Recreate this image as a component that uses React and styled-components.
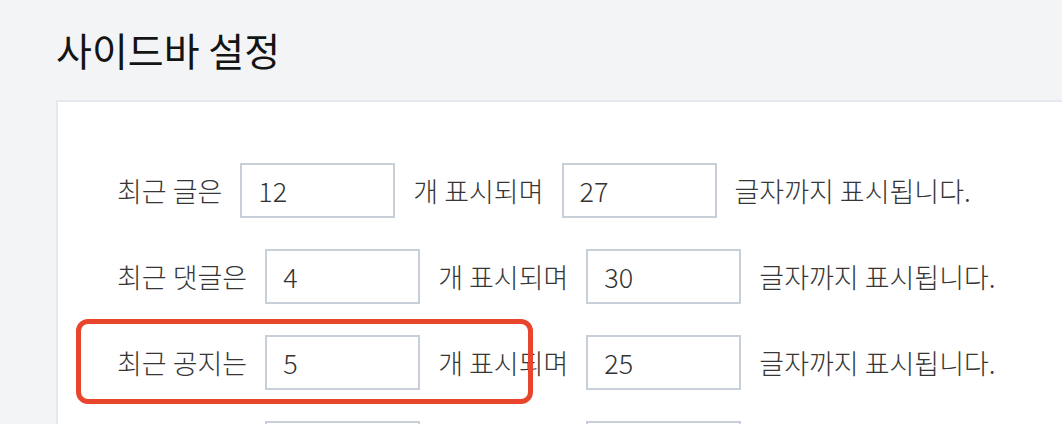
import React from "react";
import styled, { createGlobalStyle } from "styled-components";

const Global = createGlobalStyle`
  html, body { margin: 0; padding: 0; background: #f3f4f6; overflow: hidden; }
  body { font-family: "Noto Sans CJK KR", "Noto Sans", sans-serif; }
  * { box-sizing: border-box; }
`;

const Page = styled.div`
  width: 1062px;
  height: 424px;
  overflow: hidden;
  padding: 30px 0 0 56px;
`;

const Title = styled.h1`
  margin: 0 0 31px 0;
  font-size: 39px;
  line-height: 39px;
  font-weight: 400;
  color: #141414;
  letter-spacing: 0;
`;

const Card = styled.section`
  width: 1100px;
  min-height: 400px;
  background: #ffffff;
  border: 2px solid #e4e8ef;
  border-right: none;
  padding: 61px 0 0 59px;
  display: flex;
  flex-direction: column;
  gap: 31px;
`;

const Row = styled.div`
  position: relative;
  display: flex;
  align-items: center;
  gap: 18px;
  height: 55px;
  font-size: 27px;
  font-weight: 300;
  color: #363636;
  white-space: nowrap;
`;

const Text = styled.span`
  line-height: 1;
`;

const NumInput = styled.input`
  width: 155px;
  height: 55px;
  border: 2px solid #c9cfd9;
  border-radius: 0;
  padding: 0 0 0 16px;
  font-family: "Noto Sans CJK KR", "Noto Sans", sans-serif;
  font-size: 27px;
  font-weight: 300;
  color: #333;
  background: #fff;
  outline: none;
`;

const Highlight = styled.div`
  position: absolute;
  left: -41px;
  top: -16px;
  width: 457px;
  height: 85px;
  border: 5px solid #e8452c;
  border-radius: 12px;
  pointer-events: none;
`;

const rows = [
  { label: "최근 글은", count: "12", chars: "27" },
  { label: "최근 댓글은", count: "4", chars: "30" },
  { label: "최근 공지는", count: "5", chars: "25", highlight: true },
  { label: "최근 태그는", count: "10", chars: "20" },
];

export default function App() {
  return (
    <>
      <Global />
      <Page>
        <Title>사이드바 설정</Title>
        <Card>
          {rows.map((r) => (
            <Row key={r.label}>
              <Text>{r.label}</Text>
              <NumInput defaultValue={r.count} />
              <Text>개 표시되며</Text>
              <NumInput defaultValue={r.chars} />
              <Text>글자까지 표시됩니다.</Text>
              {r.highlight && <Highlight />}
            </Row>
          ))}
        </Card>
      </Page>
    </>
  );
}
